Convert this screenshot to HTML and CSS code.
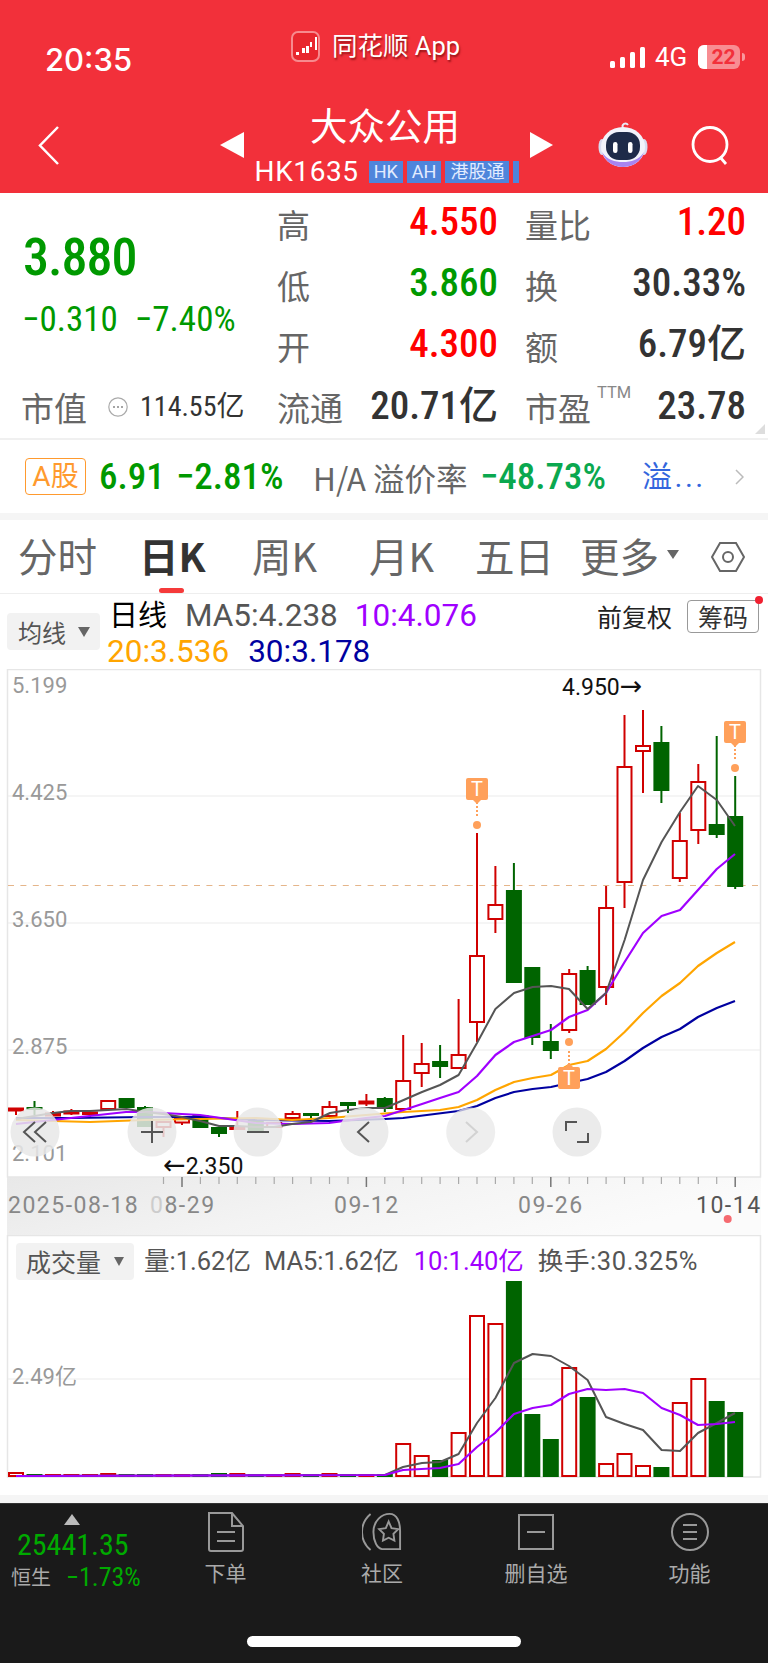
FILE: index.html
```html
<!DOCTYPE html>
<html lang="zh">
<head>
<meta charset="utf-8">
<title>大众公用</title>
<link rel="stylesheet" href="styles.css">
</head>
<body>
<div class="page">
<header class="header">
  <div class="status">
    <span class="time">20:35</span>
    <div class="app">
      <svg class="logo" viewBox="0 0 29 31"><rect x="1" y="1" width="27" height="29" rx="6" fill="#e8262e" stroke="#f78a8e" stroke-width="2"/><path d="M5 21h3v3H5zM11 17h3v5h-3zM15 15h3v7h-3zM19 11h2v5h-2zM24 6h2v13h-2z" fill="#fff"/></svg>
      <span class="app-name">同花顺 App</span>
    </div>
    <div class="sys">
      <svg class="signal" viewBox="0 0 35 21"><rect y="14" width="5" height="7" rx="1.5"/><rect x="10" y="10" width="5" height="11" rx="1.5"/><rect x="20" y="5" width="5" height="16" rx="1.5"/><rect x="30" width="5" height="21" rx="1.5"/></svg>
      <span class="net">4G</span>
      <span class="battery"><span class="battery-fill"></span><span class="battery-num">22</span></span>
      <span class="nub"></span>
    </div>
  </div>
  <div class="nav">
    <svg class="back" viewBox="0 0 21 39"><path d="M20 1 2 19.500 20 38" fill="none" stroke="#fff" stroke-width="2.500"/></svg>
    <div class="nav-mid">
      <span class="tri-left"></span>
      <div class="name-block">
        <div class="name">大众公用</div>
        <div class="code-line"><span class="code">HK1635</span><span class="tag">HK</span><span class="tag">AH</span><span class="tag">港股通</span><span class="tag stub"></span></div>
      </div>
      <span class="tri-right"></span>
    </div>
    <svg class="robot" viewBox="0 0 50 46"><path d="M25 6c-2-4 3-6 5-3" fill="none" stroke="#e8eaf6" stroke-width="2"/><ellipse cx="4" cy="25" rx="3.500" ry="8" fill="#d8dcf0"/><ellipse cx="46" cy="25" rx="3.500" ry="8" fill="#d8dcf0"/><ellipse cx="25" cy="25" rx="22" ry="20" fill="#f2f3fb"/><path d="M4 30c3 10 12 15 21 15s18-5 21-15c-5 8-13 10-21 10S9 38 4 30z" fill="#a884f0"/><rect x="8" y="10" width="34" height="28" rx="13" fill="#1e2b49"/><rect x="15" y="20" width="4.500" height="11" rx="2.200" fill="#fff"/><rect x="30" y="20" width="4.500" height="11" rx="2.200" fill="#fff"/></svg>
    <svg class="search" viewBox="0 0 39 39"><circle cx="19" cy="18.500" r="17" fill="none" stroke="#fff" stroke-width="2.800"/><path d="m29 31 6 7" stroke="#fff" stroke-width="2.800"/></svg>
  </div>
</header>

<section class="quote">
  <div class="price-cell">
    <div class="price">3.880</div>
    <div class="change"><span>−0.310</span><span>−7.40%</span></div>
  </div>
  <div class="stat"><span class="lbl">高</span><span class="val up">4.550</span></div>
  <div class="stat stat-r"><span class="lbl">量比</span><span class="val up">1.20</span></div>
  <div class="stat"><span class="lbl">低</span><span class="val down">3.860</span></div>
  <div class="stat stat-r"><span class="lbl">换</span><span class="val">30.33%</span></div>
  <div class="stat"><span class="lbl">开</span><span class="val up">4.300</span></div>
  <div class="stat stat-r"><span class="lbl">额</span><span class="val">6.79亿</span></div>
  <div class="cap"><span class="lbl">市值</span><svg class="eye" viewBox="0 0 20 20"><circle cx="10" cy="10" r="9.200" fill="none" stroke="#aaa" stroke-width="1.200"/><path d="M5 10h2M9 10h2M13 10h2" stroke="#888" stroke-width="1.400"/></svg><span class="cap-val">114.55亿</span></div>
  <div class="stat"><span class="lbl">流通</span><span class="val">20.71亿</span></div>
  <div class="stat stat-r"><span class="lbl">市盈<sup class="ttm">TTM</sup></span><span class="val">23.78</span></div>
  <span class="corner"></span>
</section>

<section class="sub">
  <span class="a-tag">A股</span>
  <span class="sub-num down">6.91</span>
  <span class="sub-num down">−2.81%</span>
  <span class="lbl sub-lbl">H/A 溢价率</span>
  <span class="sub-num teal">−48.73%</span>
  <span class="link">溢...</span>
  <svg class="more" viewBox="0 0 9 16"><path d="m1 1 7 7-7 7" fill="none" stroke="#bbb" stroke-width="1.500"/></svg>
</section>

<nav class="tabs">
  <span class="tab">分时</span>
  <span class="tab active">日K</span>
  <span class="tab">周K</span>
  <span class="tab">月K</span>
  <span class="tab">五日</span>
  <span class="tab">更多<i class="tab-tri"></i></span>
  <svg class="hex" viewBox="0 0 34 30"><path d="M1 15 9 1h16l8 14-8 14H9z" fill="none" stroke="#666" stroke-width="2"/><circle cx="17" cy="15" r="5" fill="none" stroke="#666" stroke-width="2"/></svg>
</nav>

<section class="ma">
  <div class="pill ma-pill">均线<i class="pill-tri"></i></div>
  <div class="ma-text">
    <div><span class="ma-name">日线</span><span class="c-gray">MA5:4.238</span><span class="c-purple">10:4.076</span></div>
    <div><span class="c-orange">20:3.536</span><span class="c-navy">30:3.178</span></div>
  </div>
  <div class="ma-right">
    <span class="fq">前复权</span>
    <span class="chip">筹码</span>
  </div>
</section>

<svg class="kline" viewBox="0 669 768 566">
  <defs><linearGradient id="axisbg" x1="0" y1="0" x2="1" y2="0.3"><stop offset="0" stop-color="#e8e8e8"/><stop offset="0.5" stop-color="#f3f3f3"/><stop offset="1" stop-color="#fbfbfb"/></linearGradient></defs>
  <rect class="axis-bg" x="7" y="1177" width="754" height="58" fill="url(#axisbg)"/>
  <rect class="frame" x="7.500" y="669.500" width="753" height="507.500"/>
  <path class="grid" d="M8 796H760M8 923H760M8 1050H760"/>
  <path class="dash" d="M8 885.500H760"/>
  <text class="ylab" x="12" y="693">5.199</text>
  <text class="ylab" x="12" y="800">4.425</text>
  <text class="ylab" x="12" y="927">3.650</text>
  <text class="ylab" x="12" y="1054">2.875</text>
  <text class="ylab" x="12" y="1161">2.101</text>

  <path class="wick-r" d="M16 1108V1115M53 1111V1118M71.400 1109V1115M90 1112V1117M163.500 1122V1137M182 1119V1125M237.300 1111V1129M292.600 1111V1118M329.500 1101V1116M366.400 1094V1106M403.200 1035V1081M421.700 1043V1087M458.600 999V1055M477 833V1042M495.400 866V933M569.200 969V1033M606.100 886V1005M624.500 715V908M643 710V793M679.800 813V882M698.300 764V844"/>
  <path class="wick-g" d="M34.500 1101V1115M145 1106V1127M219 1127V1137M255.800 1117V1132M311 1113V1122M348 1102V1113M384.800 1097V1112M440.100 1045V1078M513.900 863V983M532.300 967V1045M550.800 1024V1059M587.600 966V1005M661.400 726V803M716.700 736V838M735.200 776V889"/>
  <g class="hollow">
    <rect x="9" y="1108.500" width="14" height="2"/><rect x="46" y="1113.500" width="14" height="2"/><rect x="64.400" y="1111.500" width="14" height="2"/><rect x="83" y="1112.500" width="14" height="1.500"/><rect x="101.200" y="1101" width="14" height="8"/><rect x="156.500" y="1122" width="14" height="5"/><rect x="175" y="1119" width="14" height="3.500"/><rect x="230.300" y="1127" width="14" height="2"/><rect x="267.200" y="1123" width="14" height="4"/><rect x="285.600" y="1114" width="14" height="4"/><rect x="322.500" y="1107" width="14" height="9"/><rect x="359.400" y="1101.500" width="14" height="2"/><rect x="396.200" y="1081" width="14" height="28"/><rect x="414.700" y="1064" width="14" height="9"/><rect x="451.600" y="1055" width="14" height="13"/><rect x="470" y="956" width="14" height="66"/><rect x="488.400" y="905" width="14" height="14"/><rect x="562.200" y="974" width="14" height="56"/><rect x="599.100" y="908" width="14" height="79"/><rect x="617.500" y="767" width="14" height="115"/><rect x="636" y="746" width="14" height="5"/><rect x="672.800" y="841" width="14" height="37"/><rect x="691.300" y="782" width="14" height="48"/>
  </g>
  <g class="solid">
    <rect x="26.500" y="1107" width="16" height="3"/><rect x="118.600" y="1098" width="16" height="10"/><rect x="137" y="1107" width="16" height="20"/><rect x="192.400" y="1115" width="16" height="13"/><rect x="211" y="1127" width="16" height="7"/><rect x="247.800" y="1120" width="16" height="12"/><rect x="303" y="1113" width="16" height="3"/><rect x="340" y="1102" width="16" height="4"/><rect x="376.800" y="1098" width="16" height="11"/><rect x="432.100" y="1061" width="16" height="6"/><rect x="505.900" y="890" width="16" height="93"/><rect x="524.300" y="967" width="16" height="71"/><rect x="542.800" y="1041" width="16" height="10"/><rect x="579.600" y="970" width="16" height="35"/><rect x="653.400" y="742" width="16" height="49"/><rect x="708.700" y="824" width="16" height="11"/><rect x="727.200" y="816" width="16" height="71"/>
  </g>

  <polyline class="l-navy" points="16,1118 71,1118 145,1117 200,1117 256,1120 329,1121 385,1119 403,1118 458.600,1111 477,1106 495.400,1098 514,1092 532.600,1089 551,1087 569,1083 587.600,1079 606,1072 624.600,1061 643,1048 661.600,1037 680,1029 698,1017 716.800,1008 735,1001"/>
  <polyline class="l-orange" points="16,1120 90,1122 145,1120 200,1119 256,1118 292,1120 329,1118 366,1115 403,1112 440,1110 458.600,1107 477,1100 495.400,1090 514,1082 532.600,1078 551,1075 569,1065 587.600,1061 606,1049 624.600,1032 643,1013 661.600,996 680,983 698,966 716.800,953 735,942"/>
  <polyline class="l-purple" points="16,1124 71,1118 126,1112 145,1112 200,1115 256,1123 292,1124 329,1123 366,1118 385,1116 403.600,1110 422,1104 440,1098 458.600,1092 477,1076 495.400,1055 514,1042 532.600,1036 551,1030 569,1017 587.600,1010 606,993 624.600,962 643,933 661.600,916 680,910 698,890 716.800,869 735,854"/>
  <polyline class="l-gray" points="16,1119 34.500,1116 53,1113 71,1111 90,1111 108,1110 126.600,1109 145,1112 163,1114 182,1117 200,1121 219,1126 237,1126 256,1127 274,1127 292,1124 311,1122 330,1113 348,1110 366,1108 385,1108 403.600,1100 422,1092 440,1085 458.600,1075 477,1043 495.400,1009 514,993 532.600,987 551,986 569,989 587.600,1009 606,993 624.600,940 643,880 661.600,842 680,812 698,786 716.800,800 735,826"/>

  <g class="mark">
    <path d="M477 802V818M735 745V761M569 1065V1050" class="mark-dots"/>
    <circle cx="477" cy="825" r="4"/><circle cx="735" cy="768" r="4"/><circle cx="569" cy="1042" r="4"/>
    <rect x="466" y="778" width="22" height="22" rx="2"/><path d="m473 800 4 4 4-4z"/>
    <rect x="724" y="721" width="22" height="22" rx="2"/><path d="m731 743 4 4 4-4z"/>
    <rect x="558" y="1067" width="22" height="22" rx="2"/><path d="m565 1067 4-4 4 4z"/>
    <text class="mark-t" x="477" y="796">T</text><text class="mark-t" x="735" y="739">T</text><text class="mark-t" x="569" y="1085">T</text>
  </g>

  <text class="price-mark" x="562" y="695">4.950<tspan class="arrow">→</tspan></text>
  <text class="price-mark" x="163" y="1174"><tspan class="arrow">←</tspan>2.350</text>

  <path class="tick" d="M163.500 1177v7M200.400 1177v7M219 1177v7M237.300 1177v7M255.800 1177v7M274.200 1177v7M292.600 1177v7M311 1177v7M329.500 1177v7M348 1177v7M384.800 1177v7M403.200 1177v7M421.700 1177v7M440.100 1177v7M458.600 1177v7M477 1177v7M495.400 1177v7M513.900 1177v7M532.300 1177v7M569.200 1177v7M587.600 1177v7M606.100 1177v7M624.500 1177v7M643 1177v7M661.400 1177v7M679.800 1177v7M698.300 1177v7M716.700 1177v7"/>
  <path class="tick-big" d="M182 1177v10M366.400 1177v10M550.800 1177v10M735.200 1177v10"/>
  <text class="xlab" x="8" y="1213">2025-08-18</text>
  <text class="xlab" x="150" y="1213"><tspan class="xlab-fade">0</tspan>8-29</text>
  <text class="xlab" x="334" y="1213">09-12</text>
  <text class="xlab" x="518" y="1213">09-26</text>
  <text class="xlab xlab-last" x="696" y="1213">10-14</text>
  <circle class="end-dot" cx="727.700" cy="1219" r="4"/>

  <g class="btns">
    <circle cx="35" cy="1132" r="24.500"/><circle cx="152" cy="1132" r="24.500"/><circle cx="258" cy="1132" r="24.500"/><circle cx="364" cy="1132" r="24.500"/><circle class="btn-faint" cx="470.700" cy="1132" r="24.500"/><circle cx="577" cy="1132" r="24.500"/>
  </g>
  <path class="btn-ico" d="M35 1122l-11 10 11 10M46 1122l-11 10 11 10M152 1121v22M141 1132h22M247 1132h22M369 1122l-11 10 11 10M566 1131v-9h11M588 1133v9h-11"/>
  <path class="btn-ico-faint" d="M466 1122l11 10-11 10"/>
</svg>

<section class="vol">
  <div class="vol-head">
    <div class="pill vol-pill">成交量<i class="pill-tri"></i></div>
    <span class="vol-a">量:1.62亿</span><span class="vol-b">MA5:1.62亿</span><span class="vol-c">10:1.40亿</span><span class="vol-d">换手:30.325%</span>
  </div>
  <svg class="vol-chart" viewBox="0 1235 768 260">
    <rect class="frame" x="7.500" y="1235.500" width="753" height="241.500"/>
    <path class="grid" d="M8 1379H760"/>
    <text class="ylab" x="12" y="1384">2.49亿</text>
    <g class="hollow">
      <rect x="9" y="1473" width="14" height="3"/><rect x="46" y="1475" width="14" height="1"/><rect x="64.400" y="1475" width="14" height="1"/><rect x="83" y="1475" width="14" height="1"/><rect x="101.200" y="1474" width="14" height="2"/><rect x="156.500" y="1475" width="14" height="1"/><rect x="175" y="1475" width="14" height="1"/><rect x="230.300" y="1474" width="14" height="2"/><rect x="267.200" y="1475" width="14" height="1"/><rect x="285.600" y="1474" width="14" height="2"/><rect x="322.500" y="1474" width="14" height="2"/><rect x="359.400" y="1475" width="14" height="1"/>
      <rect x="396.200" y="1444" width="14" height="32"/><rect x="414.700" y="1456" width="14" height="20"/><rect x="451.600" y="1433" width="14" height="43"/><rect x="470" y="1316" width="14" height="160"/><rect x="488.400" y="1324" width="14" height="152"/><rect x="562.200" y="1368" width="14" height="108"/><rect x="599.100" y="1464" width="14" height="12"/><rect x="617.500" y="1454" width="14" height="22"/><rect x="636" y="1466" width="14" height="10"/><rect x="672.800" y="1403" width="14" height="73"/><rect x="691.300" y="1379" width="14" height="97"/>
    </g>
    <g class="solid">
      <rect x="26.500" y="1474" width="16" height="3"/><rect x="118.600" y="1474" width="16" height="3"/><rect x="137" y="1474" width="16" height="3"/><rect x="192.400" y="1474" width="16" height="3"/><rect x="211" y="1473" width="16" height="4"/><rect x="247.800" y="1474" width="16" height="3"/><rect x="303" y="1474" width="16" height="3"/><rect x="340" y="1474" width="16" height="3"/><rect x="376.800" y="1474" width="16" height="3"/>
      <rect x="432.100" y="1460" width="16" height="17"/><rect x="505.900" y="1281" width="16" height="196"/><rect x="524.300" y="1414" width="16" height="63"/><rect x="542.800" y="1439" width="16" height="38"/><rect x="579.600" y="1397" width="16" height="80"/><rect x="653.400" y="1467" width="16" height="10"/><rect x="708.700" y="1401" width="16" height="76"/><rect x="727.200" y="1412" width="16" height="65"/>
    </g>
    <polyline class="l-gray" points="16,1476 385,1475 403,1467 422,1463 440,1462 458.600,1454 477,1423 495.400,1398 514,1363 532.600,1354 551,1356 569,1366 587.600,1380 606,1417 624.600,1424 643,1430 661.600,1450 680,1451 698,1433 716.800,1423 735,1413"/>
    <polyline class="l-purple" points="16,1476 385,1475 403,1470 440,1468 458.600,1464 477,1447 495,1433 514,1414 532.600,1408 551,1405 569,1394 587.600,1389 606,1390 624.600,1389 643,1393 661.600,1408 680,1415 698,1425 716.800,1424 735,1422"/>
  </svg>
</section>

<footer class="bar">
  <div class="bar-row">
    <div class="index">
      <i class="index-tri"></i>
      <div class="index-num">25441.35</div>
      <div class="index-line"><span class="index-name">恒生</span><span class="index-pct">−1.73%</span></div>
    </div>
    <div class="bar-item">
      <svg class="bar-ico" viewBox="0 0 40 40"><path d="M3 1h23l11 13v23a2 2 0 0 1-2 2H5a2 2 0 0 1-2-2zM26 1v13h11M11 20h18M11 29h18"/></svg>
      <span>下单</span>
    </div>
    <div class="bar-item">
      <svg class="bar-ico" viewBox="0 0 42 40"><path d="M9 1C2 7 0 14 0 20s2 13 9 19M29 1c-8 0-17 7-17 19 0 10 4 17 9 18h19V19C40 10 37 1 29 1zM28 9l3 7 7 1-5 5 1 7-6-3-6 3 1-7-5-5 7-1z"/></svg>
      <span>社区</span>
    </div>
    <div class="bar-item">
      <svg class="bar-ico" viewBox="0 0 40 40"><path d="M3 3h34v34H3zM11 20h18"/></svg>
      <span>删自选</span>
    </div>
    <div class="bar-item">
      <svg class="bar-ico" viewBox="0 0 40 40"><circle cx="20" cy="20" r="18"/><path d="M13 13h14M13 20h14M13 27h14"/></svg>
      <span>功能</span>
    </div>
  </div>
  <div class="home"></div>
</footer>
</div>
</body>
</html>
```
FILE: styles.css
```css
* { box-sizing: border-box; }
html, body { margin: 0; padding: 0; }
body { background: #fff; font-family: Roboto, "Noto Sans CJK SC", sans-serif; color: #333; }
.page { width: 768px; height: 1663px; overflow: hidden; display: flex; flex-direction: column; }
i { display: block; font-style: normal; }
svg { display: block; }

/* header */
.header { height: 193px; flex: none; background: #f2303a; color: #fff; padding-top: 31px; }
.status { height: 37px; display: flex; padding: 0 23px 0 45px; }
.time { width: 246px; font: 500 31px/40px Inter, sans-serif; margin-top: 9px; }
.app { display: flex; align-items: center; gap: 12px; height: 31px; text-shadow: 1px 2px 2px rgba(90,0,0,.6); }
.logo { width: 29px; height: 31px; }
.app-name { font-size: 25.500px; line-height: 31px; white-space: nowrap; }
.sys { margin-left: auto; display: flex; align-items: center; margin-top: 14px; height: 24px; }
.signal { width: 35px; height: 21px; fill: #fff; }
.net { margin-left: 10px; font: 400 26px/24px Roboto, sans-serif; width: 43px; }
.battery { position: relative; width: 42px; height: 24px; border-radius: 6px; background: rgba(255,255,255,.45); overflow: hidden; display: block; }
.battery-fill { position: absolute; left: 0; top: 0; bottom: 0; width: 9px; background: #fff; }
.battery-num { position: absolute; left: 9px; right: 0; top: 0; text-align: center; font: 700 21px/24px Roboto, sans-serif; color: #f2303a; }
.nub { width: 3px; height: 8px; margin-left: 2px; border-radius: 0 3px 3px 0; background: rgba(255,255,255,.5); }
.nav { height: 78px; margin-top: 38px; display: flex; align-items: center; padding-left: 38px; }
.back { width: 21px; height: 39px; margin-right: 161px; }
.nav-mid { width: 333px; display: flex; align-items: center; justify-content: space-between; }
.tri-left, .tri-right { width: 0; height: 0; border-top: 13px solid transparent; border-bottom: 13px solid transparent; }
.tri-left { border-right: 24px solid #fff; }
.tri-right { border-left: 23px solid #fff; }
.name-block { display: flex; flex-direction: column; align-items: center; }
.name { font-size: 37.500px; line-height: 40px; margin-right: 4px; }
.code-line { display: flex; align-items: center; margin-top: 14px; height: 22px; }
.code { font-size: 28px; line-height: 22px; margin-right: 10px; letter-spacing: .6px; }
.tag { height: 22px; line-height: 22px; font-size: 18px; padding: 0 5px; margin-right: 4px; background: #4f85db; color: #e3ecff; }
.stub { width: 6px; padding: 0; margin: 0; }
.robot { width: 50px; height: 46px; margin-left: 45px; }
.search { width: 39px; height: 39px; margin-left: 43px; }

/* quote */
.quote { position: relative; height: 245px; flex: none; display: grid; grid-template-columns: 256px 221px 248px; grid-template-rows: repeat(3, 61px) 62px; padding: 0 0 0 21px; align-items: center; }
.lbl { color: #666; font-family: "Noto Sans CJK SC", sans-serif; font-weight: 400; font-size: 33px; line-height: 40px; white-space: nowrap; }
.price-cell { grid-row: 1 / span 3; align-self: start; padding: 39px 0 0 2px; }
.price { font: 500 52px/52px Roboto, sans-serif; font-stretch: 75%; letter-spacing: -1px; color: #090; }
.change { display: flex; gap: 17px; margin-top: 19px; margin-left: -1px; font: 400 35px/34px Roboto, sans-serif; font-stretch: 75%; color: #090; }
.stat { display: flex; justify-content: space-between; align-items: center; height: 40px; }
.stat-r { margin-left: 27px; }
.val { font: 500 39px/40px Roboto, "Noto Sans CJK SC", sans-serif; font-stretch: 75%; color: #333; white-space: nowrap; padding-bottom: 3px; }
.up { color: #f00; }
.down { color: #090; }
.teal { color: #0aa84f; }
.ttm { font: 400 16.500px/15px Roboto, sans-serif; color: #888; vertical-align: top; margin-left: 6px; position: relative; top: -2px; }
.cap { display: flex; align-items: center; }
.eye { width: 20px; height: 20px; margin: 0 12px 0 21px; }
.cap-val { font: 400 28px/30px Roboto, "Noto Sans CJK SC", sans-serif; font-stretch: 75%; color: #333; white-space: nowrap; }
.corner { position: absolute; right: 3px; bottom: 4px; width: 0; height: 0; border-left: 10px solid transparent; border-bottom: 10px solid #ddd; }

/* sub row */
.sub { height: 75px; flex: none; border-top: 2px solid #f0f0f0; padding-left: 25px; display: grid; grid-template-columns: 74px 77px 137px 167px 162px 93px 9px; align-items: center; }
.a-tag { width: 61px; height: 37px; border: 1px solid #ff9a2e; border-radius: 4px; color: #ff9a2e; font-size: 28px; line-height: 35px; text-align: center; white-space: nowrap; }
.sub-num { font: 500 37px/40px Roboto, sans-serif; font-stretch: 77%; white-space: nowrap; }
.sub-lbl { font-size: 31.500px; }
.link { color: #3366dd; font-size: 30px; line-height: 40px; white-space: nowrap; letter-spacing: 2.500px; }
.more { width: 9px; height: 16px; }

/* tabs */
.tabs { height: 81px; flex: none; border-top: 7px solid #f5f5f5; border-bottom: 1.500px solid #eee; padding-left: 18px; display: grid; grid-template-columns: 121px 113px 117px 106px 105px 131px 34px; align-items: center; }
.tab { position: relative; display: flex; align-items: center; font-family: "Noto Sans CJK SC", sans-serif; font-size: 39.500px; line-height: 44px; color: #666; white-space: nowrap; top: -2px; }
.active { color: #333; font-weight: 700; }
.active::after { content: ""; position: absolute; left: 20px; top: 55px; width: 25px; height: 5px; border-radius: 3px; background: #f53a3a; }
.tab-tri { width: 0; height: 0; margin-left: 8px; border-left: 6px solid transparent; border-right: 6px solid transparent; border-top: 9px solid #666; }
.hex { width: 34px; height: 30px; }

/* MA row */
.ma { height: 75px; flex: none; display: flex; align-items: flex-start; padding-left: 7px; }
.pill { display: flex; align-items: center; background: #f2f2f2; border-radius: 4px; color: #555; font-family: "Noto Sans CJK SC", sans-serif; white-space: nowrap; }
.ma-pill { width: 93px; height: 37px; margin-top: 19px; padding-left: 11px; font-size: 24px; }
.pill-tri { width: 0; height: 0; margin-left: 12px; border-left: 6.500px solid transparent; border-right: 6.500px solid transparent; border-top: 10px solid #666; }
.ma-text { margin-left: 9px; width: 460px; padding-top: 1px; font: 400 31.500px/36px Roboto, sans-serif; white-space: nowrap; }
.ma-text span { margin-right: 17px; }
.ma-name { font-family: "Noto Sans CJK SC", sans-serif; font-size: 29px; color: #000; margin-right: 18px !important; }
.c-gray { color: #555; }
.c-purple { color: #a000ff; }
.c-orange { color: #ffa500; margin-left: -2px; margin-right: 19px !important; }
.c-navy { color: #0000a0; }
.ma-right { position: relative; display: flex; align-items: center; margin-top: 4px; }
.fq { font-family: "Noto Sans CJK SC", sans-serif; font-size: 25px; color: #222; margin-left: 28px; white-space: nowrap; }
.chip { position: relative; width: 72px; height: 33px; margin-left: 15px; border: 1px solid #999; border-radius: 4px; font-family: "Noto Sans CJK SC", sans-serif; font-size: 25px; line-height: 31px; text-align: center; color: #333; }
.chip::after { content: ""; position: absolute; right: -5px; top: -5px; width: 8px; height: 8px; border-radius: 50%; background: #f02030; }

/* chart */
.kline { width: 768px; height: 566px; flex: none; }
.frame { fill: none; stroke: #e6e6e6; stroke-width: 1.500; }
.grid { stroke: #ececec; stroke-width: 1.200; fill: none; }
.dash { stroke: #e5b58a; stroke-width: 1; stroke-dasharray: 6 6.400; fill: none; }
.ylab { font: 400 22px Roboto, "Noto Sans CJK SC", sans-serif; fill: #999; }
.wick-r { stroke: #d00000; stroke-width: 2; fill: none; }
.wick-g { stroke: #006400; stroke-width: 2; fill: none; }
.hollow rect { fill: #fff; stroke: #d00000; stroke-width: 2; }
.solid rect { fill: #006400; }
polyline { fill: none; stroke-linejoin: round; }
.l-gray { stroke: #555; stroke-width: 2; }
.l-purple { stroke: #a000ff; stroke-width: 2.200; }
.l-orange { stroke: #ffa500; stroke-width: 2.200; }
.l-navy { stroke: #0000a0; stroke-width: 2.200; }
.mark circle, .mark rect, .mark path { fill: #ffa05a; }
.mark .mark-dots { fill: none; stroke: #ffa05a; stroke-width: 2; stroke-dasharray: 2 2; }
.mark-t { font: 400 20px Roboto, sans-serif; fill: #fff; text-anchor: middle; }
.price-mark { font: 400 23px Roboto, sans-serif; fill: #111; }
.arrow { font-family: "DejaVu Sans", sans-serif; font-size: 27px; }
.tick { stroke: #aaa; stroke-width: 1.200; fill: none; }
.tick-big { stroke: #777; stroke-width: 1.500; fill: none; }
.xlab { font: 400 23px Roboto, sans-serif; fill: #888; letter-spacing: 1.500px; }
.xlab-fade { fill: #ccc; }
.xlab-last { fill: #555; }
.end-dot { fill: #f56a70; }
.btns circle { fill: rgba(232,232,232,.85); }
.btns .btn-faint { fill: rgba(232,232,232,.75); }
.btn-ico { stroke: #555; stroke-width: 2; fill: none; }
.btn-ico-faint { stroke: #d2d2d2; stroke-width: 2; fill: none; }

/* volume */
.vol { position: relative; width: 768px; height: 268px; flex: none; border-bottom: 8px solid #f5f5f5; }
.vol-chart { width: 768px; height: 260px; }
.vol-head { position: absolute; left: 16px; top: 8px; display: flex; align-items: center; font: 400 25.500px/37px Roboto, "Noto Sans CJK SC", sans-serif; color: #555; white-space: nowrap; }
.vol-pill { width: 118px; height: 37px; padding-left: 10px; font-size: 25px; margin-right: 10px; }
.vol-pill .pill-tri { margin-left: 13px; border-left-width: 5.500px; border-right-width: 5.500px; border-top-width: 9px; }
.vol-b { margin-left: 13px; }
.vol-c { margin-left: 15px; color: #a000ff; }
.vol-d { margin-left: 14px; letter-spacing: .6px; }

/* bottom bar */
.bar { flex: 1; background: #1a1a1a; display: flex; flex-direction: column; border-top: 1px solid #333; }
.bar-row { height: 132px; display: grid; grid-template-columns: 148px 155px 158px 150px 157px; padding-top: 8px; }
.index { position: relative; padding-left: 11px; padding-top: 18px; }
.index-tri { position: absolute; left: 64px; top: 2px; width: 0; height: 0; border-left: 8.500px solid transparent; border-right: 8.500px solid transparent; border-bottom: 11px solid #bbb; }
.index-num { padding-left: 6px; font: 400 30px/30px Roboto, sans-serif; font-stretch: 75%; color: #0a0; }
.index-line { display: flex; align-items: center; margin-top: 3px; }
.index-name { font: 400 20px/28px "Noto Sans CJK SC", sans-serif; color: #aaa; }
.index-pct { margin-left: 15px; font: 400 26px/28px Roboto, sans-serif; font-stretch: 75%; color: #0a0; white-space: nowrap; }
.bar-item { display: flex; flex-direction: column; align-items: center; font: 400 21px/26px "Noto Sans CJK SC", sans-serif; color: #aaa; }
.bar-ico { width: 40px; height: 40px; margin-bottom: 7px; fill: none; stroke: #999; stroke-width: 2; }
.home { width: 274px; height: 11px; margin: 0 auto; border-radius: 6px; background: #fff; }
```
